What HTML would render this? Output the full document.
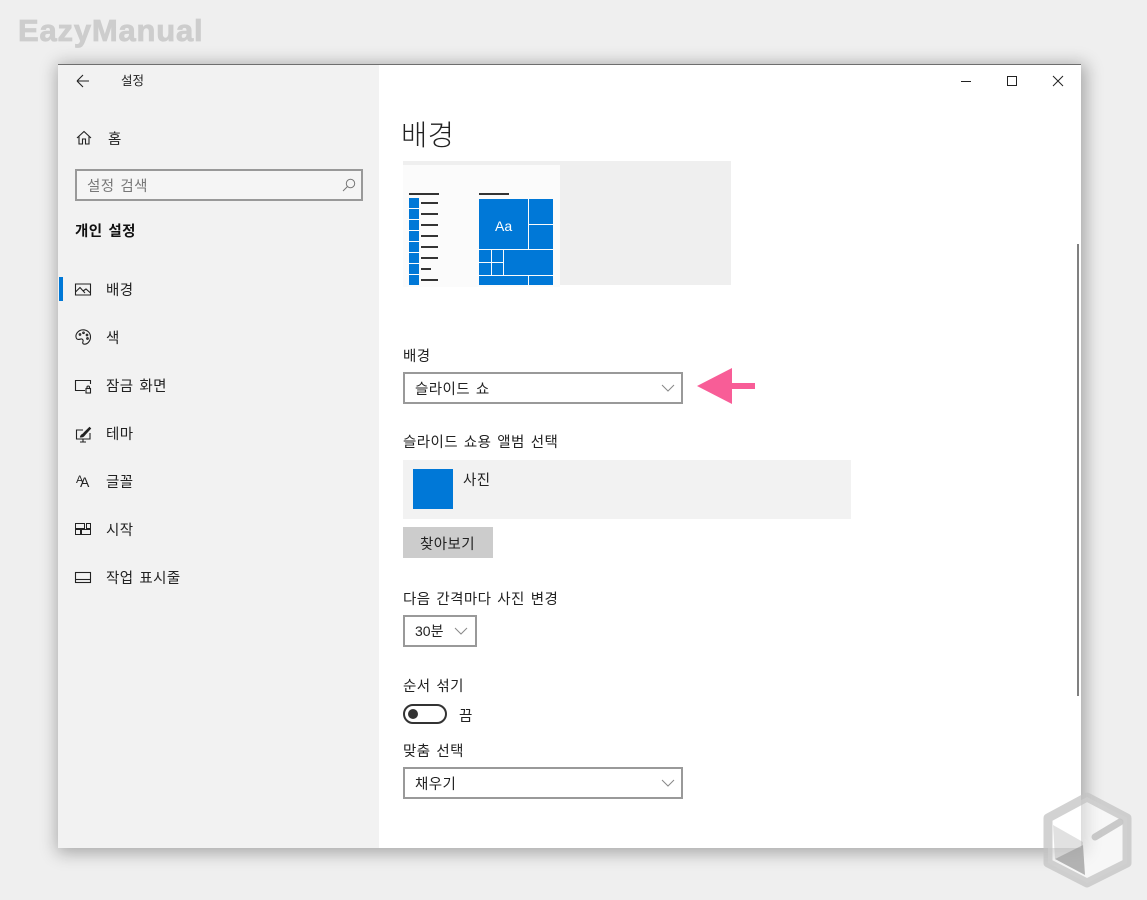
<!DOCTYPE html>
<html lang="ko"><head><meta charset="utf-8">
<style>
html,body{margin:0;padding:0;width:1147px;height:900px;overflow:hidden;background:#efefef}
body{position:relative;font-family:"Liberation Sans","Noto Sans CJK KR",sans-serif;color:#222}
.a{position:absolute;white-space:nowrap;line-height:20px}
.t{font-size:14.5px;letter-spacing:.4px;word-spacing:1.5px;margin-top:1px}
#win{position:absolute;left:58px;top:65px;width:1023px;height:783px;background:#fff;box-shadow:2px 2px 16px 3px rgba(0,0,0,.3);}
#side{position:absolute;left:58px;top:65px;width:321px;height:783px;background:#f2f2f2}
#top{position:absolute;left:58px;top:64px;width:1023px;height:1px;background:#6e6e6e}
.box{position:absolute;box-sizing:border-box;border:2px solid #999;background:#fff}
.b{position:absolute;background:#0078d7}
.l{position:absolute;background:#333;height:2px}
svg{position:absolute;overflow:visible}
</style></head><body>
<div class="a" style="left:18px;top:14px;font-size:31px;line-height:34px;font-weight:bold;color:#cdcdcd;letter-spacing:.8px;-webkit-text-stroke:.8px #cdcdcd">EazyManual</div>
<div id="win"></div><div id="side"></div><div id="top"></div>

<svg style="left:76px;top:74px" width="16" height="14" fill="none" stroke="#222" stroke-width="1.1"><path d="M1 7H13M1 7L7 1M1 7L7 13"/></svg>
<div class="a" style="left:121px;top:71px;font-size:12.5px">설정</div>

<svg style="left:76px;top:130px" width="16" height="15" fill="none" stroke="#222" stroke-width="1.1"><path d="M1 8L8 1.500L15 8M3 6.500V14H6.500V9H9.500V14H13V6.500"/></svg>
<div class="a t" style="left:108px;top:129px">홈</div>

<div class="box" style="left:75px;top:169px;width:288px;height:32px;background:#f5f5f5"></div>
<div class="a t" style="left:87px;top:176px;color:#777">설정 검색</div>
<svg style="left:342px;top:178px" width="14" height="14" fill="none" stroke="#777" stroke-width="1"><circle cx="8.500" cy="5.500" r="4.200"/><path d="M5.500 8.500L1 13"/></svg>

<div class="a t" style="left:75px;top:221px;font-weight:bold;color:#111">개인 설정</div>

<div style="position:absolute;left:59px;top:277px;width:4px;height:24px;background:#0078d7"></div>

<svg style="left:75px;top:283px" width="16" height="13" fill="none" stroke="#222" stroke-width="1.100"><path d="M.5 1H15.500V12H.5ZM.5 9L5 4.500L10 10M8 8L11 6L15.500 10"/></svg>
<div class="a t" style="left:106px;top:280px">배경</div>

<svg style="left:75px;top:329px" width="16" height="16" fill="none" stroke="#222" stroke-width="1.100"><path d="M8 .8C12.500 .8 15.500 4 15.500 8C15.500 12 12.500 15.200 9.500 15.200C7.500 15.200 7.500 13.500 8 12.500C8.500 11 7.500 9.800 6 10C4 10.500 2.500 11 1.500 9.500C-.5 6 3 .8 8 .8Z"/><circle cx="5" cy="5.500" r=".8"/><circle cx="8.500" cy="3.800" r=".8"/><circle cx="12" cy="6" r=".8"/><circle cx="12.500" cy="9.500" r=".8"/></svg>
<div class="a t" style="left:106px;top:328px">색</div>

<svg style="left:75px;top:379px" width="16" height="15" fill="none" stroke="#222" stroke-width="1.100"><path d="M10 11.500H.5V1.500H15.500V5"/><rect x="11" y="9.500" width="4.500" height="4.500"/><path d="M12 9.500V8C12 6.800 14.500 6.800 14.500 8V9.500"/></svg>
<div class="a t" style="left:106px;top:376px">잠금 화면</div>

<svg style="left:75px;top:427px" width="16" height="16" fill="none" stroke="#222" stroke-width="1.100"><path d="M8 3H1.500V12H15V6M5 15H11M8 12V15"/><path d="M5.500 10C6 7 8 8 9 6L14.500 .5L15.500 1.500L10 7.500C8.500 9.500 8 10 5.500 10Z" fill="#222"/></svg>
<div class="a t" style="left:106px;top:424px">테마</div>

<div class="a" style="left:76px;top:470px;font-size:11px;color:#222">A</div>
<div class="a" style="left:80px;top:472px;font-size:14px;color:#222">A</div>
<div class="a t" style="left:106px;top:472px">글꼴</div>

<svg style="left:75px;top:523px" width="16" height="12" fill="none" stroke="#222" stroke-width="1"><rect x=".5" y=".5" width="9" height="5"/><rect x="11.500" y=".5" width="4" height="5"/><rect x=".5" y="6.500" width="5" height="5"/><rect x="6.500" y="6.500" width="9" height="5"/></svg>
<div class="a t" style="left:106px;top:520px">시작</div>

<svg style="left:75px;top:572px" width="16" height="11" fill="none" stroke="#222" stroke-width="1.100"><rect x=".5" y=".5" width="15" height="10"/><path d="M.5 7.500H15.500"/></svg>
<div class="a t" style="left:106px;top:568px">작업 표시줄</div>

<div style="position:absolute;left:961px;top:81px;width:10px;height:1px;background:#222"></div>
<div style="position:absolute;left:1007px;top:76px;width:8px;height:8px;border:1px solid #222"></div>
<svg style="left:1053px;top:76px" width="10" height="10" fill="none" stroke="#222" stroke-width="1"><path d="M0 0L10 10M10 0L0 10"/></svg>

<div class="a" style="left:401px;top:118px;font-size:28.5px;line-height:36px;color:#222;letter-spacing:.5px;font-weight:300">배경</div>

<div style="position:absolute;left:403px;top:161px;width:328px;height:124px;background:#efefef"></div>
<div style="position:absolute;left:403px;top:165px;width:157px;height:122px;background:#fbfbfb"></div>
<div class="l" style="left:409px;top:193px;width:30px"></div>
<div class="l" style="left:479px;top:193px;width:30px"></div>
<div class="b" style="left:409px;top:198px;width:10px;height:10px"></div><div class="l" style="left:421px;top:202px;width:17px"></div>
<div class="b" style="left:409px;top:209px;width:10px;height:10px"></div><div class="l" style="left:421px;top:213px;width:17px"></div>
<div class="b" style="left:409px;top:220px;width:10px;height:10px"></div><div class="l" style="left:421px;top:224px;width:17px"></div>
<div class="b" style="left:409px;top:231px;width:10px;height:10px"></div><div class="l" style="left:421px;top:235px;width:17px"></div>
<div class="b" style="left:409px;top:242px;width:10px;height:10px"></div><div class="l" style="left:421px;top:246px;width:17px"></div>
<div class="b" style="left:409px;top:253px;width:10px;height:10px"></div><div class="l" style="left:421px;top:257px;width:17px"></div>
<div class="b" style="left:409px;top:264px;width:10px;height:10px"></div><div class="l" style="left:421px;top:268px;width:10px"></div>
<div class="b" style="left:409px;top:275px;width:10px;height:10px"></div><div class="l" style="left:421px;top:279px;width:17px"></div>

<div class="b" style="left:479px;top:199px;width:49px;height:50px"></div>
<div class="a" style="left:495px;top:216px;font-size:14px;color:#fff">Aa</div>
<div class="b" style="left:529px;top:199px;width:24px;height:25px"></div>
<div class="b" style="left:529px;top:225px;width:24px;height:24px"></div>
<div class="b" style="left:479px;top:250px;width:12px;height:12px"></div>
<div class="b" style="left:492px;top:250px;width:11px;height:12px"></div>
<div class="b" style="left:479px;top:263px;width:12px;height:12px"></div>
<div class="b" style="left:492px;top:263px;width:11px;height:12px"></div>
<div class="b" style="left:504px;top:250px;width:49px;height:25px"></div>
<div class="b" style="left:479px;top:276px;width:49px;height:9px"></div>
<div class="b" style="left:529px;top:276px;width:24px;height:9px"></div>

<div class="a t" style="left:403px;top:346px">배경</div>
<div class="box" style="left:403px;top:372px;width:280px;height:32px"></div>
<div class="a t" style="left:415px;top:379px">슬라이드 쇼</div>
<svg style="left:661px;top:384px" width="14" height="8" fill="none" stroke="#888" stroke-width="1"><path d="M1 1L7 7L13 1"/></svg>
<svg style="left:697px;top:368px" width="58" height="36" fill="#f85d97"><path d="M0 18L35 0V15H58V21H35V36Z"/></svg>

<div class="a t" style="left:403px;top:432px">슬라이드 쇼용 앨범 선택</div>
<div style="position:absolute;left:403px;top:460px;width:448px;height:59px;background:#f2f2f2"></div>
<div class="b" style="left:413px;top:469px;width:40px;height:40px"></div>
<div class="a t" style="left:463px;top:470px">사진</div>
<div style="position:absolute;left:403px;top:527px;width:90px;height:31px;background:#ccc"></div>
<div class="a t" style="left:420px;top:534px">찾아보기</div>

<div class="a t" style="left:403px;top:589px">다음 간격마다 사진 변경</div>
<div class="box" style="left:403px;top:615px;width:74px;height:32px"></div>
<div class="a" style="left:415px;top:621px;font-size:14px">30분</div>
<svg style="left:454px;top:627px" width="14" height="8" fill="none" stroke="#888" stroke-width="1"><path d="M1 1L7 7L13 1"/></svg>

<div class="a t" style="left:403px;top:676px">순서 섞기</div>
<div style="position:absolute;box-sizing:border-box;left:403px;top:704px;width:44px;height:20px;border:2px solid #333;border-radius:10px;background:#fff"></div>
<div style="position:absolute;left:408px;top:709px;width:10px;height:10px;border-radius:50%;background:#333"></div>
<div class="a t" style="left:459px;top:706px">끔</div>

<div class="a t" style="left:403px;top:741px">맞춤 선택</div>
<div class="box" style="left:403px;top:767px;width:280px;height:32px"></div>
<div class="a t" style="left:415px;top:774px">채우기</div>
<svg style="left:661px;top:779px" width="14" height="8" fill="none" stroke="#888" stroke-width="1"><path d="M1 1L7 7L13 1"/></svg>

<div style="position:absolute;left:1077px;top:244px;width:2px;height:452px;background:#808080"></div>

<svg style="left:1043px;top:790px" width="90" height="100">
<path d="M44 7L84 28V73L44 93L5 73V28Z" fill="rgba(255,255,255,.5)" stroke="rgba(195,195,195,.75)" stroke-width="9" stroke-linejoin="round"/>
<path d="M10 35L40 52V55L12 69Z" fill="rgba(170,170,170,.35)"/>
<path d="M12 69L40 55L42 85Z" fill="rgba(150,150,150,.7)"/>
<path d="M52 47L77 32" stroke="rgba(195,195,195,.9)" stroke-width="7" stroke-linecap="round" fill="none"/>
</svg>
</body></html>
